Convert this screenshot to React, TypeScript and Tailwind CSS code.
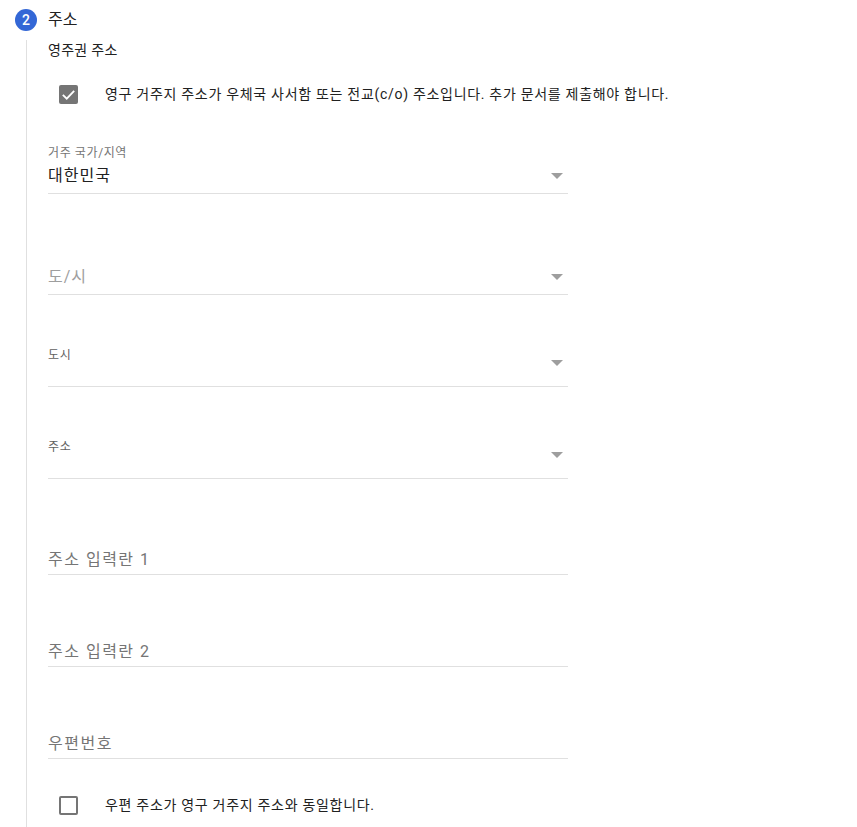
import React from 'react';

const font = { fontFamily: "Roboto, 'Noto Sans CJK KR', sans-serif" };

const Arrow = ({ className = '' }: { className?: string }) => (
  <svg width="12" height="6" viewBox="0 0 12 6" className={className}>
    <path d="M0 0 L12 0 L6 6 Z" fill="#9e9e9e" />
  </svg>
);

const CheckRow = ({ checked, label }: { checked: boolean; label: string }) => (
  <div className="flex items-center">
    <div className="w-[57px] pl-[11px]">
      {checked ? (
        <div className="w-[19px] h-[19px] rounded-[2px] bg-[#757575] flex items-center justify-center">
          <svg width="17" height="17" viewBox="0 0 24 24">
            <path d="M4 12.5 L9.5 18 L20 7" fill="none" stroke="white" strokeWidth="2.6" />
          </svg>
        </div>
      ) : (
        <div className="w-[19px] h-[19px] rounded-[2px] border-2 border-[#757575]" />
      )}
    </div>
    <span className="text-[14px] tracking-[0.7px] text-[#212121]">{label}</span>
  </div>
);

const TextField = ({ placeholder, className = '' }: { placeholder: string; className?: string }) => (
  <div className={`w-[520px] border-b border-[#e0e0e0] pb-[2px] ${className}`}>
    <div className="text-base leading-6 tracking-[1.5px] text-[#757575]">{placeholder}</div>
  </div>
);

const SelectWithLabel = ({ label, className = '' }: { label: string; className?: string }) => (
  <div className={`w-[520px] h-[40px] border-b border-[#e0e0e0] flex justify-between ${className}`}>
    <div className="text-xs leading-4 tracking-[0.6px] text-[#616161]">{label}</div>
    <Arrow className="mt-[13px] mr-[5px]" />
  </div>
);

export default function App() {
  return (
    <div className="bg-white w-[857px] h-[827px] overflow-hidden text-[#212121]" style={font}>
      <div className="flex items-center pt-[8px] pl-[15px]">
        <div className="w-[22px] h-[22px] rounded-full bg-[#3367d6] text-white text-[14px] font-medium flex items-center justify-center">
          2
        </div>
        <span className="ml-[11px] text-base">주소</span>
      </div>
      <div className="mt-[8px] ml-[26px] border-l border-[#e0e0e0] pl-[21px] h-[800px]">
        <div className="text-sm leading-5 tracking-[0.3px]">영주권 주소</div>

        <div className="mt-[24px]">
          <CheckRow checked label="영구 거주지 주소가 우체국 사서함 또는 전교(c/o) 주소입니다. 추가 문서를 제출해야 합니다." />
        </div>

        <div className="mt-[40px] w-[520px] border-b border-[#e0e0e0] pb-[5px]">
          <div className="text-xs leading-4 tracking-[0.6px] text-[#757575]">거주 국가/지역</div>
          <div className="mt-[3px] flex items-center justify-between">
            <span className="text-base leading-6 tracking-[1px] text-[#212121]">대한민국</span>
            <Arrow className="mr-[5px]" />
          </div>
        </div>

        <div className="mt-[71px] w-[520px] border-b border-[#e0e0e0] pb-[5px] flex items-center justify-between">
          <span className="text-base leading-6 tracking-[1px] text-[#9e9e9e]">도/시</span>
          <Arrow className="mr-[5px]" />
        </div>

        <SelectWithLabel label="도시" className="mt-[52px]" />
        <SelectWithLabel label="주소" className="mt-[52px]" />

        <TextField placeholder="주소 입력란 1" className="mt-[69px]" />
        <TextField placeholder="주소 입력란 2" className="mt-[65px]" />
        <TextField placeholder="우편번호" className="mt-[65px]" />

        <div className="mt-[36px]">
          <CheckRow checked={false} label="우편 주소가 영구 거주지 주소와 동일합니다." />
        </div>
      </div>
    </div>
  );
}
